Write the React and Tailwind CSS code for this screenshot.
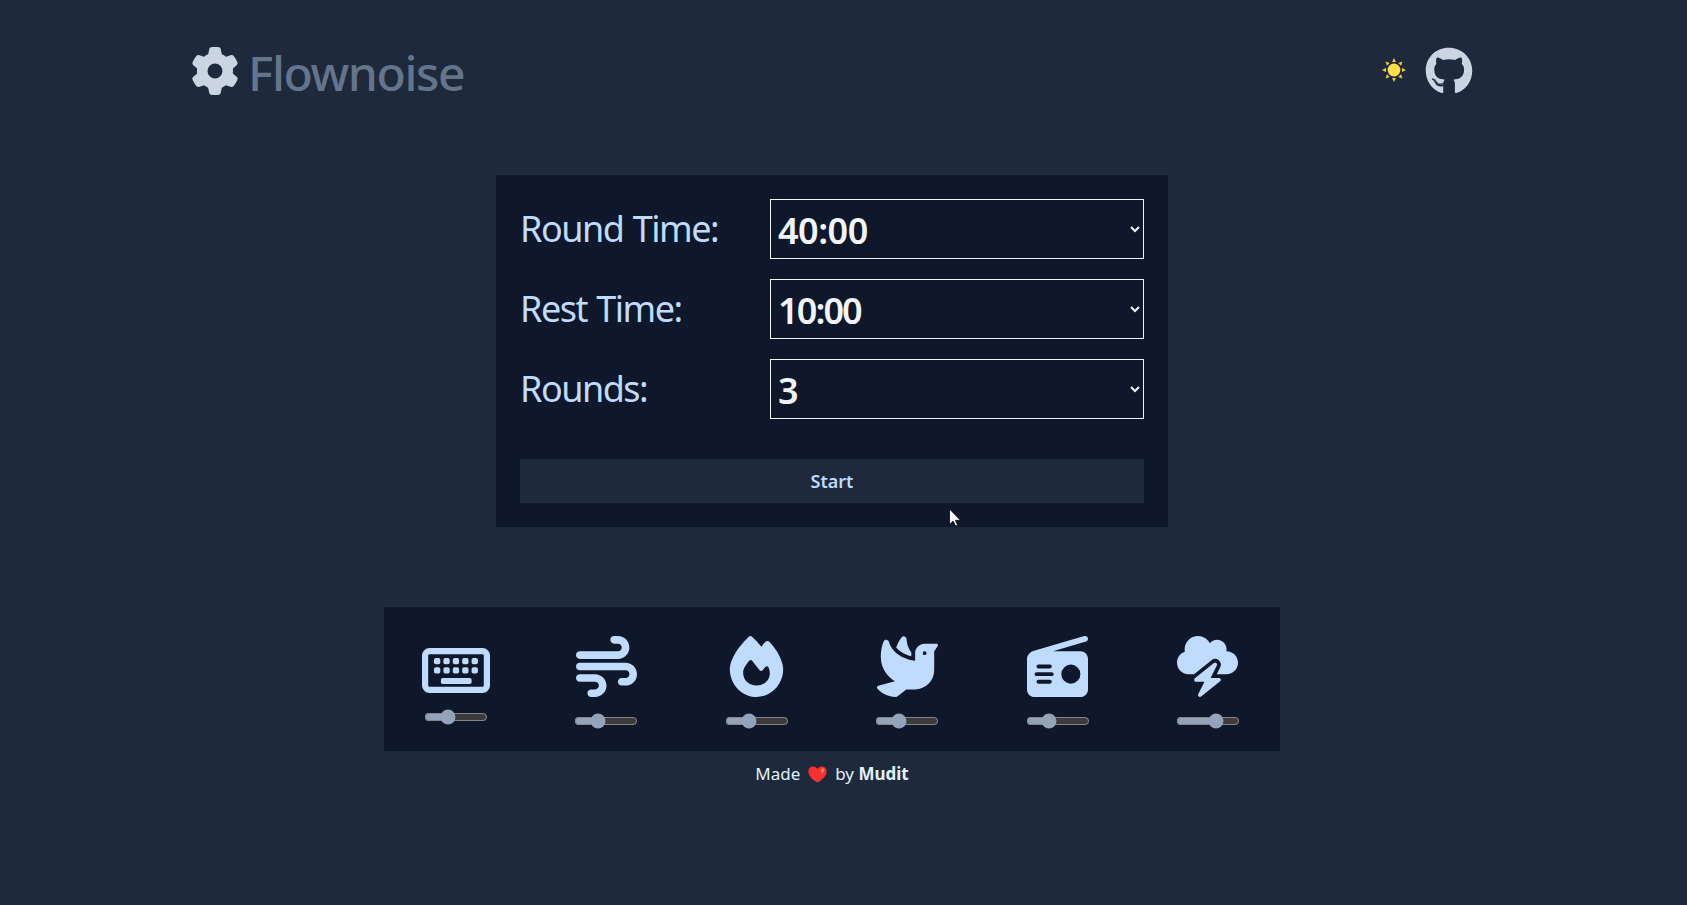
import React from "react";
import { FaGear, FaGithub, FaWind, FaFire, FaDove, FaRadio, FaCloudBolt } from "react-icons/fa6";

const settings = [
  { label: "Round Time:", value: "40:00", tracking: "tracking-[-0.5px]" },
  { label: "Rest Time:", value: "10:00", tracking: "tracking-[-1.9px]" },
  { label: "Rounds:", value: "3", tracking: "tracking-[-0.5px]" },
];

const keyColumns = [12, 21.4, 30.8, 40.2, 49.6];

function Keyboard({ className }) {
  return (
    <svg className={className} viewBox="0 0 68 45" fill="currentColor">
      <rect x="3.1" y="3.1" width="61.8" height="38.8" rx="4.5" fill="none" stroke="currentColor" strokeWidth="6.2" />
      {keyColumns.map((x) => (
        <g key={x}>
          <rect x={x} y="10" width="6.3" height="6.2" rx="1.8" />
          <rect x={x} y="19.300" width="6.3" height="6.2" rx="1.8" />
        </g>
      ))}
      <rect x="18.900" y="29.900" width="30.700" height="6.100" rx="1.8" />
    </svg>
  );
}

const sounds = [
  { name: "Keyboard", Icon: Keyboard, volume: 33, wide: true },
  { name: "Wind", Icon: FaWind, volume: 33 },
  { name: "Fire", Icon: FaFire, volume: 33 },
  { name: "Birds", Icon: FaDove, volume: 33 },
  { name: "Radio", Icon: FaRadio, volume: 33 },
  { name: "Storm", Icon: FaCloudBolt, volume: 67 },
];

const rays = [0, 45, 90, 135, 180, 225, 270, 315];

function Sun() {
  return (
    <svg className="mb-[2px] h-6 w-6" viewBox="-12 -12 24 24">
      <circle r="6.4" fill="#ffe04a" />
      {rays.map((a) => (
        <path key={a} d="M-1.9 -8 L0 -12 L1.9 -8 Z" fill="#f5cc3d" transform={`rotate(${a})`} />
      ))}
    </svg>
  );
}

function Heart() {
  return (
    <svg className="h-[17px] w-[19px]" viewBox="0 0 19 17">
      <path d="M9.5 16.6C6 14.6.4 10.300.4 5.400.4 2.400 2.400.5 5 .5c2 0 3.600 1 4.500 2.600C10.400 1.500 12 .5 14 .5c2.600 0 4.600 1.900 4.600 4.900 0 4.900-5.600 9.200-9.100 11.200z" fill="#f8312f" />
      <ellipse cx="14.600" cy="4.600" rx="1.500" ry="2.300" fill="#ff8478" transform="rotate(25 14.600 4.600)" />
    </svg>
  );
}

function Header() {
  return (
    <header className="flex h-[142px] w-[1282px] items-center justify-between">
      <div className="flex items-center gap-[9px]">
        <FaGear className="h-12 w-12 text-[#cbd5e1]" />
        <h1 className="mt-[3px] text-[48px] leading-[64px] font-medium tracking-[-1.4px] text-[#64748b]">Flownoise</h1>
      </div>
      <div className="flex items-center gap-[19px]">
        <Sun />
        <FaGithub className="h-12 w-12 text-[#cbd5e1]" />
      </div>
    </header>
  );
}

function Timer() {
  return (
    <section className="mt-[33px] flex h-[352px] w-[672px] flex-col bg-[#0f172a] p-6">
      <div className="flex flex-col gap-5">
        {settings.map(({ label, value, tracking }) => (
          <div key={label} className="flex h-[60px] items-center justify-between">
            <label className="text-[36px] leading-[60px] tracking-[-1.5px] text-[#bfdbfe] [word-spacing:1.500px]">{label}</label>
            <select className={`h-[60px] w-[374px] border border-[#f1f5f9] bg-[#0f172a] pt-[2px] pl-[3px] text-[36px] font-semibold text-[#f1f5f9] ${tracking}`} defaultValue={value}>
              <option>{value}</option>
            </select>
          </div>
        ))}
      </div>
      <button className="mt-10 h-11 w-full bg-[#1e293b] pt-px text-[18px] font-semibold text-[#bfdbfe]">Start</button>
    </section>
  );
}

function Sound({ name, Icon, volume, wide }) {
  return (
    <div className="flex w-[150.4px] shrink-0 flex-col items-center">
      <div className={wide ? "flex h-[68px] items-end justify-center pb-[7px]" : "flex h-[68px] items-center justify-center"}>
        <Icon className={wide ? "h-[45px] w-[68px] shrink-0" : "h-[61px] w-[61px] shrink-0"} />
      </div>
      <input
        type="range"
        aria-label={name}
        defaultValue={volume}
        className={wide ? "mt-[9px] h-4 w-[64px] accent-[#94a3b8] scheme-dark" : "mt-[13px] h-4 w-[64px] accent-[#94a3b8] scheme-dark"}
      />
    </div>
  );
}

export default function App() {
  return (
    <div className="h-[905px] w-full overflow-hidden bg-[#1e293b] font-['Noto_Sans',sans-serif]">
      <main className="relative flex w-[1664px] flex-col items-center">
        <Header />
        <Timer />
        <section className="mt-20 flex h-36 w-[896px] justify-center bg-[#0f172a] pt-[25px] text-[#bfdbfe]">
          {sounds.map((s) => (
            <Sound key={s.name} {...s} />
          ))}
        </section>
        <footer className="mt-[9px] flex h-7 items-center text-[17px] text-[#e0f2fe]">
          <span>Made</span>
          <span className="mx-2"><Heart /></span>
          <span>by <b className="font-bold">Mudit</b></span>
        </footer>
        <svg className="absolute top-[508px] left-[949px] h-[19px] w-3" viewBox="0 0 12 19">
          <path d="M.5 1v15.500l3.600-3.400 2.400 5 2.200-1-2.300-4.800H11.500z" fill="#f8fafc" stroke="#05070d" strokeWidth="0.800" />
        </svg>
      </main>
    </div>
  );
}
